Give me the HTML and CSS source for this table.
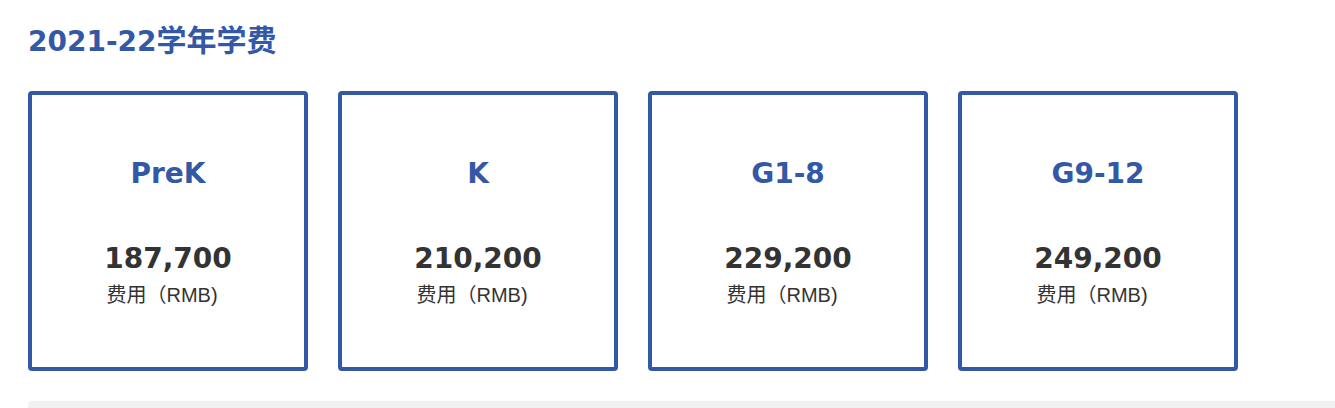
FILE: index.html
```html
<!DOCTYPE html>
<html lang="zh-CN">
<head>
<meta charset="utf-8">
<title>2021-22学年学费</title>
<link rel="stylesheet" href="styles.css">
</head>
<body>
<main class="page">
  <h1 class="title"><span class="latin">2021-22</span>学年学费</h1>
  <section class="cards">
    <div class="card">
      <div class="grade">PreK</div>
      <div class="fee">187,700</div>
      <div class="unit">费用（RMB)</div>
    </div>
    <div class="card">
      <div class="grade">K</div>
      <div class="fee">210,200</div>
      <div class="unit">费用（RMB)</div>
    </div>
    <div class="card">
      <div class="grade">G1-8</div>
      <div class="fee">229,200</div>
      <div class="unit">费用（RMB)</div>
    </div>
    <div class="card">
      <div class="grade">G9-12</div>
      <div class="fee">249,200</div>
      <div class="unit">费用（RMB)</div>
    </div>
  </section>
  <div class="band"></div>
</main>
</body>
</html>
```

FILE: styles.css
```css
html, body {
  margin: 0;
  padding: 0;
  background: #ffffff;
}

body {
  font-family: "Liberation Sans", "Noto Sans CJK SC", sans-serif;
  color: #333333;
  overflow: hidden;
}

.page {
  padding: 23px 0 0 28px;
}

.title {
  margin: 0;
  font-size: 30px;
  line-height: 36px;
  font-weight: 700;
  color: #3358a6;
}

.title .latin {
  font-family: "DejaVu Sans", "Liberation Sans", sans-serif;
  font-size: 28px;
}

.cards {
  display: flex;
  gap: 30px;
  margin-top: 31px;
}

.card {
  box-sizing: border-box;
  width: 280px;
  height: 280px;
  border: 4px solid #3358a6;
  border-radius: 4px;
  padding-top: 61px;
  display: flex;
  flex-direction: column;
  align-items: center;
  text-align: center;
}

.grade {
  font-family: "DejaVu Sans", "Liberation Sans", sans-serif;
  font-size: 28px;
  line-height: 36px;
  font-weight: 700;
  color: #3358a6;
}

.fee {
  margin-top: 49px;
  font-family: "DejaVu Sans", "Liberation Sans", sans-serif;
  font-size: 28px;
  line-height: 36px;
  font-weight: 700;
  color: #333333;
}

.unit {
  margin-top: 6px;
  font-size: 20px;
  line-height: 24px;
  color: #333333;
  margin-right: 12px;
}

.band {
  margin-top: 30px;
  height: 40px;
  background: #f1f1f1;
  border-top-left-radius: 4px;
}
```
